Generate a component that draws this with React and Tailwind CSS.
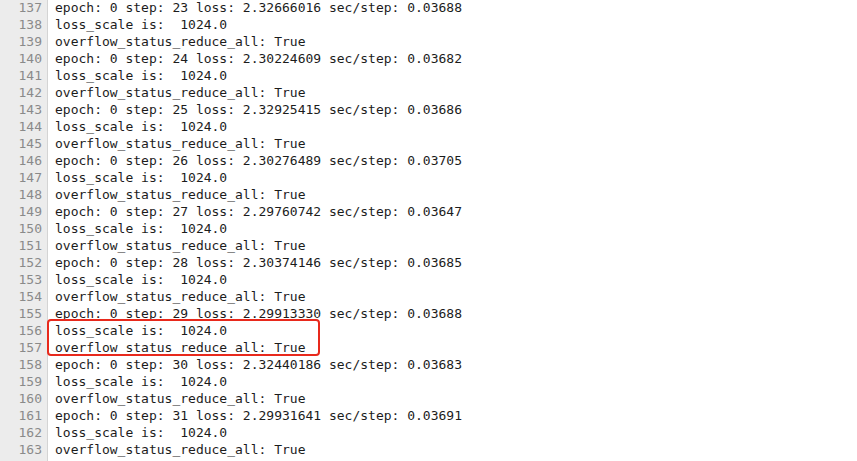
import React from "react";

const steps = [
  [23, "2.32666016", "0.03688"],
  [24, "2.30224609", "0.03682"],
  [25, "2.32925415", "0.03686"],
  [26, "2.30276489", "0.03705"],
  [27, "2.29760742", "0.03647"],
  [28, "2.30374146", "0.03685"],
  [29, "2.29913330", "0.03688"],
  [30, "2.32440186", "0.03683"],
  [31, "2.29931641", "0.03691"],
];

const lines = [];
steps.forEach(([s, l, t]) => {
  lines.push(`epoch: 0 step: ${s} loss: ${l} sec/step: ${t}`);
  lines.push("loss_scale is:  1024.0");
  lines.push("overflow_status_reduce_all: True");
});

export default function App() {
  return (
    <div
      className="relative w-[857px] h-[461px] overflow-hidden bg-white flex"
      style={{ fontFamily: '"DejaVu Sans Mono", monospace' }}
    >
      <div className="w-[48px] h-full bg-[#ececec] border-r border-[#d4d4d4] shrink-0">
        <div className="-mt-[1.5px] text-right pr-[5px] text-[13px] leading-[17px] text-[#8a8a8a]">
          {lines.map((_, i) => (
            <div key={i} className="h-[17px]">{137 + i}</div>
          ))}
        </div>
      </div>
      <div className="-mt-[1.5px] pl-[7px] text-[13px] leading-[17px] text-[#1c1c1c] whitespace-pre">
        {lines.map((t, i) => (
          <div key={i} className="h-[17px]">{t}</div>
        ))}
      </div>
      <div className="absolute left-[47px] top-[319px] w-[273px] h-[37px] border-2 border-[#e8291c] rounded-[4px]" />
    </div>
  );
}
